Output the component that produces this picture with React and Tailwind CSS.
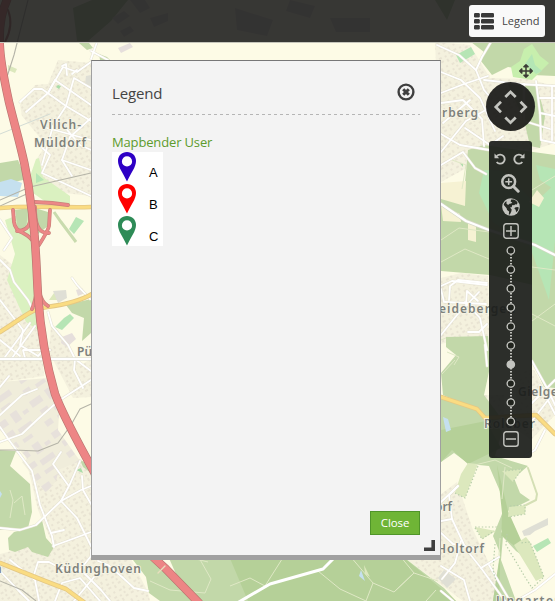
import React from 'react';
import { FaArrowsAlt } from 'react-icons/fa';

const streets = [
  // Vilich-Müldorf
  'M20 102 L34 89 L42 89 L66 106 L91 121', 'M26 112 L48 93 L63 67 L77 72 L91 62', 'M48 93 L55 80 L91 105',
  'M91 88 L74 78 L66 106 L53 126 L42 165', 'M62 66 L66 64 L67 75 M72 74 L77 70', 'M38 144 L50 155 L42 173 L91 196',
  'M91 118 L70 137 L62 160 L72 176', 'M63 125 L80 145 L91 150', 'M47 128 L91 140', 'M91 170 L62 160',
  // west
  'M0 260 L10 270 L14 282 L28 300 L34 312', 'M0 220 L12 238 L4 250', 'M0 300 L23 330 L20 345 L38 356 L42 352',
  'M0 340 L20 356', 'M5 357 L30 323', 'M12 358 L35 326', 'M25 358 L23 350 L50 350', 'M0 415 L22 395 L37 389',
  'M0 387 L9 376', 'M0 427 L9 440 L32 471 L40 505 L52 536 L54 547', 'M0 442 L22 434 L38 419 L55 404',
  'M72 278 L77 285 L90 299', 'M48 312 L52 326 L68 345 L75 359 L91 371', 'M75 359 L74 370 L83 388', 'M60 400 L91 380',
  'M0 528 L20 530 L36 525 L61 501 L81 490 L91 486', 'M61 501 L70 484 L80 461', 'M61 501 L77 518 L84 532 L91 546',
  'M53 464 L61 452 M53 464 L68 485', 'M82 476 L83 490 L91 504', 'M53 546 L67 541 L91 532', 'M51 533 L64 530',
  'M33 578 L38 562 L49 562 L60 568 L82 571', 'M80 570 L91 556 L91 550', 'M82 571 L101 590 L110 601', 'M55 601 L62 583 L80 578 L100 601',
  'M0 571 L18 590 L29 601', 'M10 560 L35 580 L39 601', 'M94 577 L74 601', 'M98 561 L108 565 L122 577 L134 588 L148 591',
  // north
  'M91 59 L97 42', 'M91 51 L108 60', 'M437 45 L459 55 L476 70 L484 90 L490 97', 'M476 70 L482 57 L491 42', 'M484 80 L520 84 L555 86',
  'M441 72 L461 80 L480 98 L495 131', 'M441 93 L464 84 L488 76', 'M441 103 L463 100 L482 119 L484 146', 'M443 123 L470 100',
  'M441 152 L466 121 L493 106', 'M441 134 L460 145 L489 150', 'M441 165 L463 152 L475 168 L486 174', 'M465 128 L490 145 L503 136',
  'M536 81 L540 113 L555 116', 'M540 98 L555 98', 'M524 84 L524 121 L550 129', 'M540 113 L541 140 L555 143', 'M552 86 L552 140',
  'M441 286 L452 281 L487 285', 'M444 302 L441 289', 'M449 300 L450 286 L458 280 L487 283', 'M445 302 L486 304', 'M466 304 L467 291 L478 301',
  'M441 335 L457 315 L479 292', 'M468 332 L479 332 L487 324', 'M465 302 L480 318 L487 350', 'M485 345 L487 366',
  'M441 521 L452 519 L466 549 L481 568 L505 601', 'M441 533 L453 544 L474 548', 'M441 566 L464 580 L470 601', 'M461 541 L455 563 L442 579',
  'M441 502 L458 486', 'M452 519 L449 495 L458 486', 'M481 568 L499 557', 'M489 565 L510 601', 'M532 361 L548 390 L555 405', 'M532 421 L555 391',
  'M532 403 L555 380', 'M525 456 L535 450 L545 430', 'M516 601 L535 590 L555 574', 'M540 385 L555 414', 'M441 591 L453 601'
];

const forests = [
  'M0 450 L16 451 L10 466 L30 484 L32 512 L28 528 L0 530Z', 'M14 532 L33 527 L42 520 L46 538 L54 547 L48 557 L32 552 L28 547 L15 552 L9 550 L8 538Z',
  'M0 163 L18 160 L23 172 L23 180 L0 185Z', 'M15 210 L29 208 L26 228 L18 231Z', 'M35 208 L48 212 L48 226 L38 234Z',
  'M66 305 L91 299 L91 333 L82 341 L84 318 L72 313Z', 'M80 460 L91 465 L91 473 L83 467Z',
  'M130 556 L155 558 L179 580 L196 601 L160 601 L149 593 L146 577Z', 'M168 556 L402 556 L444 588 L456 601 L188 601Z',
  'M471 42 L555 42 L555 76 L533 75 L515 68 L508 67 L492 75 L481 61 L484 52Z', 'M507 82 L537 86 L545 116 L540 148 L530 146 L524 120 Z',
  'M441 195 L463 204 L468 150 L484 145 L555 155 L555 290 L490 275 L441 271Z',
  'M446 337 L488 336 L490 367 L484 395 L501 418 L490 425 L481 411 L443 395 L441 373 L456 355 L446 347Z',
  'M532 284 L555 285 L555 388 L544 387 L532 360Z',
  'M441 397 L486 411 L502 432 L495 456 L528 466 L514 478 L520 493 L530 500 L508 511 L501 532 L514 543 L525 553 L529 560 L516 551 L503 537 L501 560 L516 601 L493 601 L500 553 L493 536 L502 514 L502 496 L489 466 L469 464 L454 453 L441 462Z'
];

function MapCanvas() {
  return (
    <svg className="absolute inset-0 h-[601px] w-[555px]" viewBox="0 0 555 601">
      <defs>
        <pattern id="homes" width="17" height="15" patternUnits="userSpaceOnUse" patternTransform="rotate(-32)">
          <rect width="17" height="15" fill="#f4f1de" />
          <path d="M1 1h3v2H1zM7 2h2v3H7zM12 1h3v2h-3zM3 7h2v2H3zM9 8h3v2H9zM14 7h2v3h-2zM1 12h3v2H1zM7 13h2v2H7zM12 12h2v2h-2z" fill="#e9e4d3" />
        </pattern>
        <pattern id="works" width="42" height="38" patternUnits="userSpaceOnUse" patternTransform="rotate(-35)">
          <rect width="42" height="38" fill="#f0eddb" />
          <path d="M3 4h13v7H3zM22 3h8v11h-8zM34 8h6v4h-6zM7 17h9v6H7zM20 20h16v6H20zM4 29h8v6H4zM18 31h11v4H18z" fill="#e7e1db" />
        </pattern>
      </defs>
      <rect width="555" height="601" fill="#fdfbe6" />
      {/* built-up areas */}
      <g fill="url(#homes)">
        <path d="M20 105 L35 85 L48 84 L58 60 L91 63 L91 196 L38 190 L36 160 L46 145 L22 116Z" />
        <path d="M0 255 L13 265 L32 303 L39 325 L44 376 L0 382Z" />
        <path d="M51 325 L82 365 L91 358 L91 397 L73 398 L49 352Z" />
        <path d="M24 451 L80 459 L91 475 L91 556 L130 557 L148 592 L150 601 L0 601 L0 554 L35 545 L54 547 L38 510Z" />
        <path d="M435 42 L470 45 L490 78 L528 79 L555 86 L555 143 L533 150 L503 148 L441 182Z" />
        <path d="M441 278 L461 273 L488 276 L490 365 L465 338 L441 344Z" />
        <path d="M440 495 L457 482 L473 530 L490 565 L516 601 L463 601 L402 556 L441 556Z" />
        <path d="M515 370 L534 370 L545 390 L555 388 L555 415 L531 440 L517 430Z" />
        <path d="M484 395 L504 395 L505 437 L491 433Z" />
      </g>
      <path fill="url(#works)" d="M0 382 L48 378 L60 400 L58 430 L80 461 L46 475 L32 463 L0 430Z" />
      <path d="M22 462L40 453 63 453 56 481 46 493Z" fill="url(#works)" />
      {/* meadows and woods */}
      <path d="M5 220 L31 210 L38 330 L26 322 L7 280 L15 254Z M36 159 L39 158 L43 177 L70 196 L70 206 L50 205 L26 188Z M441 185 L468 181 L467 202 L441 198Z" fill="#daf1c0" />
      <g fill="#c2d8a9">{forests.map((d) => <path key={d} d={d} />)}</g>
      <path d="M229 556 H402 L456 601 H248Z M441 430 L486 421 L501 448 L468 464 L452 450 L441 462Z M497 465 L508 511 L529 558 L501 535 L499 601 H493 L501 550 L502 513Z" fill="#b5d098" />
      <g fill="#b6e5b5">
        <path d="M76 217 L84 221 L74 234 L69 229Z M456 55 L471 47 L475 54 L460 63Z M64 318 L70 314 L74 318 L62 330 L55 327Z M479 193 L484 170 L503 171 L532 200 L532 247 L493 222Z M536 165 L555 169 V190 L540 180Z M516 220 L555 184 V241 L549 300 L530 247Z M533 546 L548 538 L551 543 L537 552Z M36 173 L44 180 L36 183Z" />
        <path d="M511 67 L520 61 L524 49 L532 44 L540 56 L549 63 L532 80 L513 77Z" fill="#c7efad" />
        <path d="M525 64 L532 54 L535 65 L542 71 L536 74Z" fill="#b4e6b5" />
      </g>
      <path d="M0 182 L11 179 L22 183 L18 197 L0 196Z M443 417 L448 419 L451 430 L446 432Z M119 563 L125 573 L121 571Z M361 570 L365 581 L359 576Z M0 491 l2 3 l-2 4z" fill="#c5e0ef" />
      <g fill="#dce8bd">
        <path d="M8 65 L17 69 L15 73 L8 70Z M54 293 L58 294 L57 300 L49 300Z M468 463 L478 464 L465 498 L455 493 L461 474Z M475 527 L496 531 L482 539Z M514 545 L526 537 L530 542 L544 577 L536 581Z M509 507 L526 505 L525 514 L508 517Z M502 471 L522 469 L513 482Z M364 565 L370 577 L365 574Z" />
        <path d="M441 183 L466 181 L465 206 L441 199Z M441 205 L460 214 L461 222 L443 221Z M539 207 L544 198 L537 190 L529 202Z M468 222 L476 224 L476 242 L468 240Z M500 414 L511 414 L510 430 L500 425Z" fill="#f6f2d3" />
      </g>
      <path d="M522 531 L548 518 L548 525 L535 531 L530 535 L524 536Z M438 578 L444 570 L456 579 L447 588Z M86 76 L91 75 V86 L85 84Z M53 291 L66 290 L67 298 L58 303Z" fill="#dfdfd5" />
      <path d="M118 48l12-5 3 4-12 6zM76 290l6-2 3 5-7 3zM62 337l10-4 4 6-9 8-6-4z" fill="#e6dfdc" />
      <path d="M79 43l10 0 4 5-6 2zM99 54l8 3 3 3h-10z" fill="#c2d8a9" />
      <path d="M58 85l3 1-2 3-3-2zM76 470l5-2 2 5zM460 163l3 1v3z" fill="#a9dca8" />
      {/* trails */}
      <g fill="none" stroke="#dfe8c5" strokeWidth="1">
        <path d="M150 581 L170 590 L205 593 L211 579 L198 556 M208 562 L184 556 M230 586 L250 578 L265 586 L284 556 M318 571 L340 589 L366 601 M366 601 L373 583 L350 556 M373 583 L394 592 L414 573 L438 581 M394 592 L414 573 L400 556 M436 590 L426 601" />
        <path d="M10 490 L13 500 L10 518 M14 503 L22 496 L25 515 M447 352 L459 357 L454 365 M441 340 L446 338 M442 374 L455 360 M441 262 L465 249 L489 259 M532 314 L555 326 M532 321 L555 304 M452 160 L466 165 L462 189 M441 240 L459 228 L489 232" />
        <path d="M475 465 L495 460 L512 468 M532 190 L555 176 M532 267 L555 270 M500 538 L499 555 M505 467 L502 499" />
      </g>
      <path d="M54 212 L61 222 L76 242" fill="none" stroke="#c9dbae" strokeWidth="3" />
      {/* residential streets */}
      <g fill="none" strokeLinejoin="round" strokeLinecap="round">
        <g stroke="#e5e2d2" strokeWidth="2.8">{streets.map((d) => <path key={d} d={d} />)}</g>
        <g stroke="#ffffff" strokeWidth="1.8">{streets.map((d) => <path key={d} d={d} />)}</g>
        <path d="M0 359 H91 M441 204 L466 221 L489 230 L535 245 L555 255" stroke="#d7d8c8" strokeWidth="3.5" />
        <path d="M0 359 H91 M441 204 L466 221 L489 230 L535 245 L555 255" stroke="#fff" strokeWidth="2.3" />
        <path d="M232 606 L270 584 L323 569 L334 558" stroke="#fff" strokeWidth="3" />
        <path d="M0 200 L30 187 L91 173 M0 206 L31 192 M28 0 L14 55 L5 83 M0 450 L14 450 L38 451 L58 443 L71 425 L80 409 L91 404 M0 581 L22 590 L36 601" stroke="#b5b4a8" strokeWidth="1.1" />
        <path d="M0 134 L50 114" stroke="#d3dcd5" />
        <path d="M528 468 L537 494 L536 500 L526 505" stroke="#d4dfb5" strokeWidth="2" />
      </g>
      <g fill="none" stroke="#b8ceaa" strokeWidth="1.2" strokeDasharray="1.4 2">
        <path d="M455 493 L465 498 L478 466 M475 527 L497 527 M475 528 L482 539 L494 531 M495 544 L493 570 L498 588 M507 534 L506 545 L525 577 L532 588 L544 577 L530 542 L520 543 M510 506 L525 505 L525 514 L509 517 M505 471 L522 469 L513 482" />
      </g>
      {/* main roads */}
      <g fill="none" strokeLinejoin="round" strokeLinecap="round">
        <path d="M0 208 C35 205 57 208 91 207 M0 332 C30 313 30 310 47 307 C69 304 82 300 92 294 M0 563 L45 581 L66 589 L85 603 M441 397 L477 409 L485 418 L536 415 L555 434" stroke="#e4c783" strokeWidth="4.6" />
        <path d="M0 208 C35 205 57 208 91 207 M0 332 C30 313 30 310 47 307 C69 304 82 300 92 294 M0 563 L45 581 L66 589 L85 603 M441 397 L477 409 L485 418 L536 415 L555 434" stroke="#fadc82" strokeWidth="3" />
        <path d="M13 210 L14 222 Q15 230 23 233 Q31 237 36 245 M50 210 L49 226 Q48 231 39 245 M30 209 L30 222 Q28 231 17 231 M35 207 C35 221 37 234 49 233 M35 202 L52 203 L68 205 M37 290 Q35 302 32 309 M39 291 Q42 303 48 306" stroke="#c98179" strokeWidth="3.8" />
        <path d="M13 210 L14 222 Q15 230 23 233 Q31 237 36 245 M50 210 L49 226 Q48 231 39 245 M30 209 L30 222 Q28 231 17 231 M35 207 C35 221 37 234 49 233 M35 202 L52 203 L68 205 M37 290 Q35 302 32 309 M39 291 Q42 303 48 306" stroke="#ec8787" strokeWidth="2.5" />
        <path d="M7 0 C-7 30 2 70 9 102 C17 135 27 165 31 205 C36 235 36 262 38 296 C40 324 44 356 55 394 C64 418 79 444 94 472 C110 507 130 538 165 568 L199 603" stroke="#b87670" strokeWidth="8.5" />
        <path d="M7 0 C-7 30 2 70 9 102 C17 135 27 165 31 205 C36 235 36 262 38 296 C40 324 44 356 55 394 C64 418 79 444 94 472 C110 507 130 538 165 568 L199 603" stroke="#ed8585" strokeWidth="7.2" />
        <path d="M8 10 Q14 25 5 42" stroke="#b87670" strokeWidth="2" />
        <path d="M158 573 L165 566" stroke="#e9ddbd" strokeWidth="1.4" />
      </g>
      <path d="M73 8 L92 0 H128 L111 21 L88 41 H77Z M435 0 H455 L447 20Z" fill="#bad4a2" />
      <path d="M112 18l12-7 6 5-12 8zM120 31l10-5 4 5-10 6zM130 0l15 0 5 8-10 5zM150 18l18-5v8l-14 6zM235 8l38 12-6 16-30-6zM290 0l25 6-5 12-24-7zM330 18l40 0v14h-34z" fill="#dfdad2" />
      <g fill="#7e817b" stroke="#f8f6e7" strokeWidth="1.6" paintOrder="stroke" className="font-['Noto_Sans'] text-[12px] font-semibold">
        <text x="40" y="129" textLength="41">Vilich-</text><text x="34" y="147" textLength="52">Müldorf</text>
        <text x="77" y="356">Püt</text><text x="55" y="573" textLength="86">Küdinghoven</text><text x="-6" y="573">n</text>
        <text x="442" y="117" textLength="36">rberg</text><text x="439" y="313" textLength="76">eidebergen</text>
        <text x="518" y="396" textLength="48">Gielgen</text><text x="484" y="428" textLength="51">Roleber</text>
        <text x="435" y="511">orf</text><text x="437" y="553" textLength="47">Holtorf</text><text x="496" y="605" textLength="66">Ungarten</text>
      </g>
    </svg>
  );
}

const markers = [
  { label: 'A', color: '#2e00c5' }, { label: 'B', color: '#ff0000' }, { label: 'C', color: '#2e8b57' }
];

function LegendDialog() {
  return (
    <section className="absolute left-[91px] top-[60px] flex h-[500px] w-[350px] flex-col border border-b-[5px] border-[#a0a0a0] border-t-[#777] bg-[#f3f3f3] px-5 pb-5">
      <header className="flex h-[54px] shrink-0 items-start justify-between pt-[21px]">
        <h1 className="text-[15px] leading-[22px] tracking-[-.15px] text-[#444]">Legend</h1>
        <svg className="mr-[5px] mt-px h-[18px] w-[18px]" viewBox="0 0 18 18" fill="none" stroke="#3f3f3f">
          <circle cx="9" cy="9" r="7.4" strokeWidth="2.4" /><path d="M6.2 6.2 11.8 11.8M11.8 6.2 6.2 11.8" strokeWidth="3" />
        </svg>
      </header>
      <div className="-mt-px h-px w-full shrink-0 bg-[repeating-linear-gradient(90deg,#b5b5b5_0_3px,transparent_3px_6px)]" />
      <div className="mt-[18px] flex-1">
        <h2 className="h-[19px] text-[13px] leading-[19px] tracking-[-.15px] text-[#5d9b2c]">Mapbender User</h2>
        <ul className="h-[94px] w-[51px] overflow-hidden bg-white">
          {markers.map(({ label, color }) => (
            <li key={label} className="flex h-8 pl-[6px]">
              <svg className="h-[30px] w-[18px] shrink-0" viewBox="0 0 18 30">
                <path fill={color} fillRule="evenodd" d="M9 0C3.8 0 0 3.8 0 9C0 15 5 21 9 29.5C13 21 18 15 18 9C18 3.8 14.2 0 9 0ZM9 4.3A5.1 5.1 0 1 1 9 14.5A5.1 5.1 0 1 1 9 4.3Z" />
              </svg>
              <span className="ml-[13px] mt-[12px] font-['Liberation_Sans'] text-[13px] leading-[18px] text-black">{label}</span>
            </li>
          ))}
        </ul>
      </div>
      <button className="h-6 w-[50px] self-end border border-[#50952a] bg-[#6fb536] text-[11.5px] leading-[22px] tracking-[-.1px] text-white">Close</button>
      <svg className="absolute bottom-[4px] right-[5px] h-[11px] w-[11px]" viewBox="0 0 11 11"><path d="M9.2 0V9.2H0" fill="none" stroke="#3f3f3f" strokeWidth="3.6" /></svg>
    </section>
  );
}

function ListIcon() {
  return (
    <svg className="h-[17px] w-[20px] shrink-0" viewBox="0 0 20 17" fill="#393939">
      {[0, 6, 12].map((y) => (
        <g key={y}>
          <rect y={y} width="5.8" height="4.4" rx="1.2" />
          <rect x="7" y={y} width="13" height="4.4" rx="1.2" />
        </g>
      ))}
    </svg>
  );
}

function Turn({ forward }) {
  return (
    <svg className={forward ? 'h-3 w-3 -scale-x-100' : 'h-3 w-3'} viewBox="0 0 12 12">
      <path d="M2.8 3.2A4.5 4.5 0 1 1 2.7 9" fill="none" stroke="#c3c4bf" strokeWidth="1.9" />
      <path d="M.5 .6V5.3H5.2Z" fill="#c3c4bf" />
    </svg>
  );
}

function Magnifier() {
  return (
    <svg className="mt-[9px] h-[19px] w-[19px] shrink-0" viewBox="0 0 19 19" fill="none" stroke="#c3c4bf">
      <circle cx="7.7" cy="7.7" r="6.4" strokeWidth="2.5" />
      <path d="M12.5 12.5 17.2 17.2" strokeWidth="3" strokeLinecap="round" />
      <path d="M4.3 7.7H11.1M7.7 4.3V11.1" strokeWidth="1.5" />
    </svg>
  );
}

function Globe() {
  return (
    <svg className="mt-[5px] h-[18px] w-[18px] shrink-0" viewBox="0 0 18 18">
      <circle cx="9" cy="9" r="8.8" fill="#c3c4bf" />
      <path d="M9.2 1.6 12 1.5 14.4 3 15.6 4.7 14.8 6.6 13.3 6.2 12.1 7.3 10.4 7.1 9.6 9.2 8 9.6 9.7 11.4 9.3 13.4 7.9 16.6 6.8 16.4 7.1 13.6 5.1 12 4.6 10.2 2.2 7.6 1.7 6.3 3.1 3.9 4.6 3.2 4.4 5.5 6.1 7 7.5 5.8 9.1 5.6 10.3 4.4 8.6 3.4Z" fill="#262a24" />
      <path d="M13 9.4 15.3 9 16.8 9.4 16 12.6 14.1 14.2 13.7 11.8 12.4 10.8Z" fill="#262a24" />
    </svg>
  );
}

function Zoom({ plus }) {
  return (
    <svg className="h-4 w-4 shrink-0" viewBox="0 0 16 16" fill="none" stroke="#c3c4bf">
      <rect x=".8" y=".8" width="14.4" height="14.4" rx="2.5" strokeWidth="1.4" />
      <path d={plus ? 'M3 8H13M8 3V13' : 'M3 8H13'} strokeWidth="1.5" />
    </svg>
  );
}

function Navigation() {
  return (
    <aside className="absolute left-[486px] top-[64px] flex w-[49px] flex-col items-center text-[#c3c4bf]">
      <FaArrowsAlt className="ml-[30px] h-[14px] w-[14px] shrink-0 text-[#3b3d36]" />
      <div className="mt-1 h-[49px] w-[49px] shrink-0 rounded-full bg-[#1d1d1b]/95">
        <svg viewBox="0 0 49 49" fill="none" stroke="#c3c4bf" strokeWidth="2.7">
          <path d="M19.3 15 24.5 9.8 29.7 15M19.3 35.5 24.5 40.7 29.7 35.5M15 19.8 9.8 25 15 30.2M34.5 19.8 39.7 25 34.5 30.2" />
        </svg>
      </div>
      <div className="mt-[10px] flex h-[317px] w-[43px] flex-col items-center rounded-[3px] bg-[#171917]/[.91] pt-[12px]">
        <div className="mr-[3px] flex gap-[7px]"><Turn /><Turn forward /></div>
        <Magnifier />
        <Globe />
        <div className="mt-[7px]"><Zoom plus /></div>
        <svg className="mt-[5px] h-[184px] w-4 shrink-0" viewBox="0 0 16 184">
          <path d="M8 10v170" stroke="#d0d1cb" strokeWidth="1.8" strokeDasharray="1.6 1.4" />
          {Array.from({ length: 10 }, (_, i) => <circle key={i} cx="7.8" cy={6.5 + i * 19} r="3.7" fill={i === 6 ? '#c3c4bf' : '#20231d'} stroke="#c3c4bf" strokeWidth="1.3" />)}
        </svg>
        <div className="mt-[3px]"><Zoom /></div>
      </div>
    </aside>
  );
}

export default function App() {
  return (
    <main className="relative h-[601px] w-[555px] overflow-hidden font-['Open_Sans',sans-serif]">
      <MapCanvas />
      <header className="relative flex h-[43px] justify-end border-b border-[#c5c5bb] bg-[#1b1b1b]/[.88] pr-[10px] pt-[5px]">
        <button className="flex h-8 w-[76px] items-center rounded-[3px] bg-[#f9f9f9] pl-[5px] text-[11px] text-[#444]">
          <ListIcon />
          <span className="ml-2 mt-px">Legend</span>
        </button>
      </header>
      <LegendDialog />
      <Navigation />
    </main>
  );
}
